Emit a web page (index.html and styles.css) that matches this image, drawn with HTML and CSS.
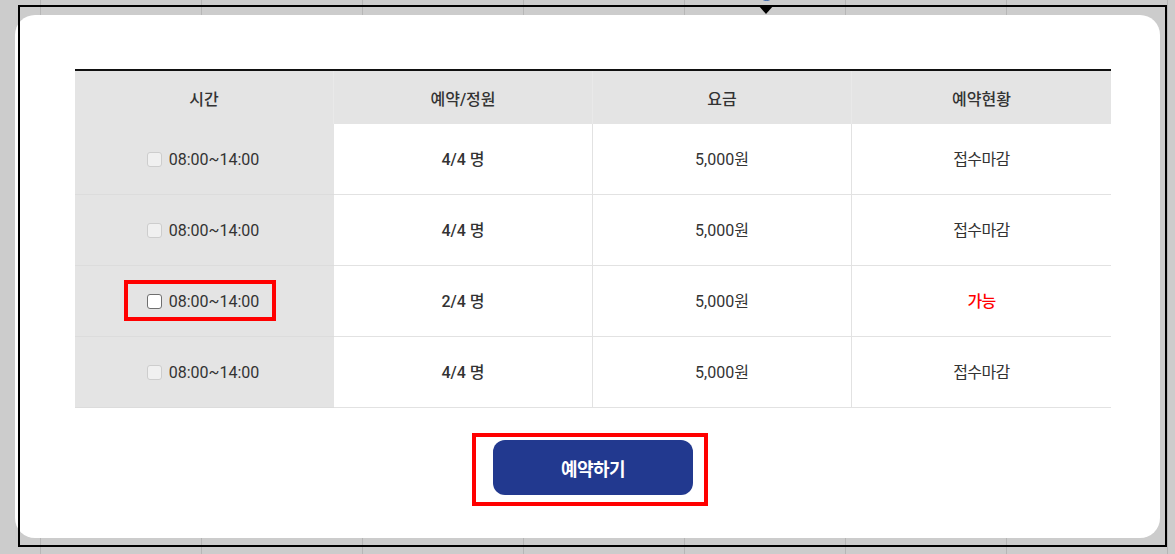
FILE: index.html
```html
<!DOCTYPE html>
<html lang="ko">
<head>
<meta charset="utf-8">
<title>예약</title>
<link rel="stylesheet" href="styles.css">
</head>
<body>
<div class="frame">
  <span class="pin"></span>
  <span class="caret"></span>
  <div class="card">
    <table class="sched">
      <thead>
        <tr><th>시간</th><th>예약/정원</th><th>요금</th><th>예약현황</th></tr>
      </thead>
      <tbody>
        <tr>
          <td class="time"><label class="slot"><input type="checkbox" disabled><span>08:00~14:00</span></label></td>
          <td class="cap">4/4 명</td>
          <td>5,000원</td>
          <td class="ko">접수마감</td>
        </tr>
        <tr>
          <td class="time"><label class="slot"><input type="checkbox" disabled><span>08:00~14:00</span></label></td>
          <td class="cap">4/4 명</td>
          <td>5,000원</td>
          <td class="ko">접수마감</td>
        </tr>
        <tr>
          <td class="time"><label class="slot mark-slot"><input type="checkbox"><span>08:00~14:00</span></label></td>
          <td class="cap">2/4 명</td>
          <td>5,000원</td>
          <td class="ko ok">가능</td>
        </tr>
        <tr class="last">
          <td class="time"><label class="slot"><input type="checkbox" disabled><span>08:00~14:00</span></label></td>
          <td class="cap">4/4 명</td>
          <td>5,000원</td>
          <td class="ko">접수마감</td>
        </tr>
      </tbody>
    </table>
    <div class="actions">
      <div class="btn-wrap"><button type="button" class="reserve">예약하기</button></div>
    </div>
  </div>
</div>
</body>
</html>
```

FILE: styles.css
```css
html, body {
  margin: 0;
}

body {
  width: 1175px;
  height: 554px;
  overflow: hidden;
  box-sizing: border-box;
  padding: 5px 0 0 18px;
  background-color: #cccccc;
  background-image: linear-gradient(to right, #b6b6b6 1px, transparent 1px);
  background-size: 161px 100%;
  background-position: 40px 0;
  font-family: Roboto, "Noto Sans CJK KR", sans-serif;
  color: #333;
}

.frame {
  position: relative;
  width: 1149px;
  height: 542px;
  box-sizing: border-box;
  padding-top: 10px;
}

.frame::after {
  content: "";
  position: absolute;
  inset: 0;
  border: 2px solid #000;
  pointer-events: none;
}

.pin {
  position: absolute;
  left: 741px;
  top: -19px;
  width: 13px;
  height: 13px;
  border: 1.5px solid #2b5ba8;
  border-radius: 50%;
}

.caret {
  position: absolute;
  left: 740px;
  top: 0;
  width: 0;
  height: 0;
  border-left: 8px solid transparent;
  border-right: 8px solid transparent;
  border-top: 9px solid #000;
  z-index: 2;
}

.card {
  width: 1145px;
  height: 523px;
  margin-left: -3px;
  box-sizing: border-box;
  padding: 54px 49px 0 60px;
  background: #fff;
  border-radius: 20px;
}

.sched {
  width: 1036px;
  table-layout: fixed;
  border-collapse: separate;
  border-spacing: 0;
  border-top: 2px solid #111;
}

.sched th {
  height: 53px;
  padding: 0;
  background: #e4e4e4;
  font-size: 16px;
  font-weight: 500;
  color: #333;
  text-align: center;
  vertical-align: middle;
  border-right: 1px solid #e9e9e9;
}

.sched th:last-child {
  border-right: 0;
}

.sched td {
  height: 69px;
  padding: 1px 0 0;
  text-align: center;
  vertical-align: middle;
  font-size: 16px;
  line-height: 20px;
  color: #333;
  border-bottom: 1px solid #e2e2e2;
  border-right: 1px solid #e2e2e2;
}

.sched td:last-child {
  border-right: 0;
}

.sched td.time {
  background: #e4e4e4;
  border-bottom-color: #dcdcdc;
  border-right: 0;
  padding-right: 3px;
}

.sched td.cap {
  font-weight: 500;
}

.sched td.ko {
  letter-spacing: -0.6px;
}

.sched td.ok {
  color: #ff0000;
  font-weight: 500;
}

.slot {
  position: relative;
  display: inline-flex;
  align-items: center;
  vertical-align: middle;
  height: 20px;
  line-height: 20px;
  color: #333;
}

.slot input {
  appearance: none;
  -webkit-appearance: none;
  width: 15px;
  height: 15px;
  margin: 0 7px 0 0;
  box-sizing: border-box;
  border: 1px solid #6f6f6f;
  border-radius: 3px;
  background: #fff;
}

.slot input:disabled {
  border-color: #cdcdcd;
  background: #f0f0f0;
}

.mark-slot::after {
  content: "";
  position: absolute;
  left: -23px;
  right: -17px;
  top: -12px;
  bottom: -9px;
  border: 4px solid #ff0000;
  pointer-events: none;
}

.actions {
  width: 1036px;
  display: flex;
  justify-content: center;
  margin-top: 32px;
}

.btn-wrap {
  position: relative;
}

.btn-wrap::after {
  content: "";
  position: absolute;
  left: -21px;
  right: -15px;
  top: -7px;
  bottom: -11px;
  border: 4px solid #ff0000;
  pointer-events: none;
}

.reserve {
  display: block;
  width: 200px;
  height: 55px;
  border: 0;
  border-radius: 12px;
  background: #22398f;
  color: #fff;
  font-family: Roboto, "Noto Sans CJK KR", sans-serif;
  font-size: 18px;
  font-weight: 700;
  letter-spacing: -0.6px;
  cursor: pointer;
}
```
